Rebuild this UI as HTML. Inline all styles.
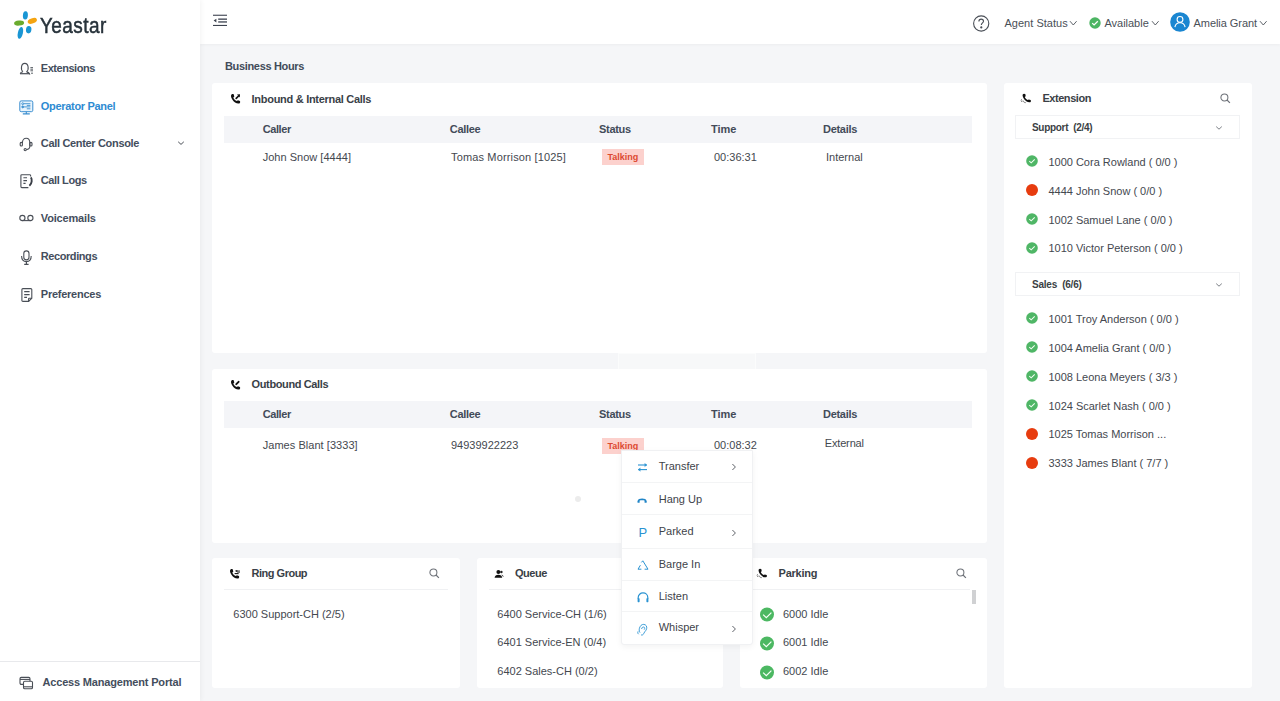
<!DOCTYPE html>
<html><head><meta charset="utf-8">
<style>
*{box-sizing:border-box;margin:0;padding:0}
html,body{width:1280px;height:701px;overflow:hidden;background:#f5f6f8;font-family:"Liberation Sans",sans-serif;color:#45494f}
.a{position:absolute}
.t{position:absolute;white-space:nowrap}
.card{position:absolute;background:#fff;border-radius:3px}
.th{position:absolute;background:#f4f5f8}
</style></head><body>
<div class="a" style="left:200px;top:0;width:1080px;height:44px;background:#fff;box-shadow:0 1px 3px rgba(0,0,0,0.04)"></div>
<div class="a" style="left:0;top:0;width:200px;height:701px;background:#fff;box-shadow:1px 0 5px rgba(0,0,0,0.05)"></div>
<svg class="a" style="left:13px;top:10px" width="26" height="30" viewBox="0 0 26 30">
<ellipse cx="12.4" cy="5.4" rx="2.5" ry="4.2" fill="#1a96d4" transform="rotate(4 12.4 5.4)"/>
<ellipse cx="19.3" cy="10.9" rx="4.8" ry="2.6" fill="#f5a411" transform="rotate(-20 19.3 10.9)"/>
<ellipse cx="6.1" cy="13.1" rx="5" ry="2.5" fill="#6aab2e" transform="rotate(-5 6.1 13.1)"/>
<ellipse cx="15.7" cy="19.7" rx="2.7" ry="3.7" fill="#1a96d4" transform="rotate(8 15.7 19.7)"/>
<ellipse cx="7.4" cy="22.9" rx="2.5" ry="6" fill="#1a96d4" transform="rotate(13 7.4 22.9)"/>
</svg>
<div class="t" style="left:39.9px;top:13.05px;font-size:21.2px;line-height:25px;font-weight:400;color:#27323a;letter-spacing:0.500px;transform:scaleX(0.8957);transform-origin:0 0;-webkit-text-stroke:0.5px #27323a;">Yeastar</div>
<svg class="a" style="left:19px;top:62px" width="15" height="13" viewBox="0 0 15 13" fill="none" stroke="#4a4f57" stroke-width="1.1">
<path d="M4 9.6 C1.6 8 1.8 1.4 5.8 1.4 C9.8 1.4 10 8 7.6 9.6"/>
<path d="M1.2 11.6 C1.6 10.4 2.6 10 4 9.8 M7.6 9.8 C9 10 10 10.4 10.4 11.6 Z" />
<path d="M1 11.7 H10.6" stroke-width="1.2"/>
<path d="M11.4 5.6 H14 M11.4 7.2 H14 M11.4 8.8 H14 M12 11.2 H14" stroke-width="0.9"/>
</svg>
<svg class="a" style="left:19px;top:99.5px" width="15" height="15" viewBox="0 0 15 15" fill="none" stroke="#3a8ed0" stroke-width="1">
<rect x="0.8" y="0.9" width="13" height="10.8" rx="1.4" fill="#e9f4fc"/>
<circle cx="3.7" cy="3.7" r="0.95" fill="#e9f4fc" stroke-width="0.9"/><path d="M4.7 3.7 H11.4" stroke-width="0.9"/>
<path d="M7.8 5.4 H11.4" stroke-width="0.9"/>
<circle cx="3.7" cy="6.9" r="0.95" fill="#3a8ed0" stroke-width="0.9"/><path d="M4.7 6.9 H11.4" stroke-width="0.9"/>
<path d="M7.8 8.8 H11.4" stroke-width="0.9"/>
<path d="M7.3 11.7 V13.6 M3.8 13.9 H10.8" stroke-width="1.1"/>
</svg>
<svg class="a" style="left:19px;top:137px" width="15" height="15" viewBox="0 0 15 15" fill="none" stroke="#4a4f57" stroke-width="1.1">
<path d="M3.4 6 C3.4 2.6 5.3 1.3 7.2 1.3 C9.1 1.3 10.8 2.6 10.8 6 V9.6 C10.8 11.2 9.6 12.3 7.3 12.6"/>
<rect x="1.2" y="5.4" width="2.2" height="3.6" rx="1"/>
<rect x="10.8" y="5.4" width="2.2" height="3.6" rx="1"/>
<circle cx="6.2" cy="12.6" r="1.1"/>
</svg>
<svg class="a" style="left:19.5px;top:173.5px" width="14" height="15" viewBox="0 0 14 15" fill="none" stroke="#4a4f57" stroke-width="1.1">
<path d="M10.6 2.4 V1.6 C10.6 1 10.2 0.7 9.6 0.7 H1.8 C1.2 0.7 0.9 1 0.9 1.6 V12.6 C0.9 13.2 1.2 13.6 1.8 13.6 H8.4"/>
<path d="M3.4 3.8 H7 M3.4 6.6 H7 M3.4 9.4 H5.6"/>
<path d="M10.8 3.4 C12.2 5 12.2 9.6 9.4 11.8" stroke-width="1.9" stroke="#3a3f47"/>
</svg>
<svg class="a" style="left:19px;top:213px" width="15" height="10" viewBox="0 0 15 10" fill="none" stroke="#4a4f57" stroke-width="1.1">
<circle cx="3.4" cy="5" r="2.6"/><circle cx="11.4" cy="5" r="2.6"/><path d="M3.4 7.6 H11.4"/>
</svg>
<svg class="a" style="left:20px;top:249.5px" width="13" height="16" viewBox="0 0 13 16" fill="none" stroke="#4a4f57" stroke-width="1.1">
<rect x="3.8" y="0.9" width="5.2" height="9" rx="2.6"/>
<path d="M1.6 6 C1.6 10 4 11.6 6.4 11.6 C8.8 11.6 11.2 10 11.2 6"/>
<path d="M6.4 11.6 V14.2 M4.2 14.4 H8.6" stroke-width="1.2"/>
</svg>
<svg class="a" style="left:20.5px;top:288px" width="13" height="15" viewBox="0 0 13 15" fill="none" stroke="#4a4f57" stroke-width="1.1">
<path d="M7.6 13.4 H1.9 C1.3 13.4 0.9 13 0.9 12.4 V1.6 C0.9 1 1.3 0.6 1.9 0.6 H9.8 C10.4 0.6 10.8 1 10.8 1.6 V10.2 Z"/>
<path d="M7.6 13.4 V10.8 C7.6 10.4 7.8 10.2 8.2 10.2 H10.8"/>
<path d="M3.2 3.6 H8.6 M3.2 6.6 H8.6 M3.2 9.4 H6"/>
</svg>
<svg class="a" style="left:18.5px;top:675.5px" width="15" height="15" viewBox="0 0 15 15" fill="none" stroke="#4a4f57" stroke-width="1.1">
<rect x="1" y="1.4" width="10" height="7" rx="1.3"/>
<path d="M1 3.4 H11"/>
<rect x="4.5" y="5.2" width="9" height="7.6" rx="1.3" fill="#fff"/>
<path d="M4.5 10.8 H13.5"/>
</svg>
<div class="t" style="left:40.8px;top:61.59px;font-size:11px;line-height:13px;font-weight:700;color:#444e5d;letter-spacing:-0.459px;">Extensions</div>
<div class="t" style="left:40.8px;top:99.99px;font-size:11px;line-height:13px;font-weight:700;color:#2e8bd2;letter-spacing:-0.311px;">Operator Panel</div>
<div class="t" style="left:40.8px;top:137.29px;font-size:11px;line-height:13px;font-weight:700;color:#444e5d;letter-spacing:-0.328px;">Call Center Console</div>
<div class="t" style="left:40.8px;top:173.69px;font-size:11px;line-height:13px;font-weight:700;color:#444e5d;letter-spacing:-0.391px;">Call Logs</div>
<div class="t" style="left:40.8px;top:211.69px;font-size:11px;line-height:13px;font-weight:700;color:#444e5d;letter-spacing:-0.167px;">Voicemails</div>
<div class="t" style="left:40.8px;top:250.09px;font-size:11px;line-height:13px;font-weight:700;color:#444e5d;letter-spacing:-0.422px;">Recordings</div>
<div class="t" style="left:40.8px;top:288.29px;font-size:11px;line-height:13px;font-weight:700;color:#444e5d;letter-spacing:-0.245px;">Preferences</div>
<svg class="a" style="left:177px;top:140px" width="8" height="6" viewBox="0 0 8 6" fill="none" stroke="#4a4f57" stroke-width="1"><path d="M1.2 1.8 L4 4.4 L6.8 1.8"/></svg>
<div class="a" style="left:0;top:661px;width:200px;height:1px;background:#e8e9ec"></div>
<div class="t" style="left:42.5px;top:675.99px;font-size:11px;line-height:13px;font-weight:700;color:#444e5d;letter-spacing:-0.178px;">Access Management Portal</div>
<svg class="a" style="left:213px;top:14px" width="15" height="13" viewBox="0 0 15 13">
<rect x="0" y="0.7" width="14" height="1.1" fill="#3d4350"/>
<rect x="5.2" y="4.5" width="8.8" height="1.3" fill="#3d4350"/>
<rect x="5.2" y="7.3" width="8.8" height="1.3" fill="#3d4350"/>
<rect x="0" y="10.9" width="14" height="1.1" fill="#3d4350"/>
<path d="M0.6 6.6 L3.4 4.8 L3.4 8.4 Z" fill="#3d4350"/>
</svg>
<svg class="a" style="left:972px;top:15px" width="19" height="17" viewBox="0 0 19 17" fill="none" stroke="#4a4f57" stroke-width="1.1">
<circle cx="9.2" cy="8.5" r="7.6"/>
<path d="M6.9 6.4 C6.9 4.9 7.9 4.1 9.2 4.1 C10.6 4.1 11.5 5 11.5 6.2 C11.5 7.8 9.3 8 9.3 10"/>
<circle cx="9.3" cy="12.4" r="0.55" fill="#4a4f57"/>
</svg>
<div class="t" style="left:1004.4px;top:16.89px;font-size:11px;line-height:13px;font-weight:400;color:#4a4f57;letter-spacing:0.033px;">Agent Status</div>
<svg class="a" style="left:1069px;top:19.8px" width="9" height="7" viewBox="0 0 9 7" fill="none" stroke="#4a4f57" stroke-width="0.9"><path d="M1 1.2 L4.3 5 L7.6 1.2"/></svg>
<svg class="a" style="left:1088.5px;top:16.5px" width="12" height="12" viewBox="0 0 12 12">
<circle cx="6" cy="6" r="5.7" fill="#4cb563"/>
<path d="M3.2 6.1 L5.1 7.9 L8.8 4.3" fill="none" stroke="#fff" stroke-width="1.3"/>
</svg>
<div class="t" style="left:1104.4px;top:16.89px;font-size:11px;line-height:13px;font-weight:400;color:#4a4f57;letter-spacing:-0.006px;">Available</div>
<svg class="a" style="left:1150.5px;top:19.8px" width="9" height="7" viewBox="0 0 9 7" fill="none" stroke="#4a4f57" stroke-width="0.9"><path d="M1 1.2 L4.3 5 L7.6 1.2"/></svg>
<svg class="a" style="left:1169.5px;top:12px" width="20" height="20" viewBox="0 0 20 20">
<circle cx="10" cy="10" r="9.8" fill="#1a86d1"/>
<circle cx="10" cy="7.4" r="2.9" fill="none" stroke="#fff" stroke-width="1.1"/>
<path d="M4.9 15.2 C5.4 12.2 7.4 10.8 10 10.8 C12.6 10.8 14.6 12.2 15.1 15.2" fill="none" stroke="#fff" stroke-width="1.1"/>
</svg>
<div class="t" style="left:1193.5px;top:16.89px;font-size:11px;line-height:13px;font-weight:400;color:#4a4f57;letter-spacing:-0.050px;">Amelia Grant</div>
<svg class="a" style="left:1258.5px;top:19.8px" width="9" height="7" viewBox="0 0 9 7" fill="none" stroke="#4a4f57" stroke-width="0.9"><path d="M1 1.2 L4.3 5 L7.6 1.2"/></svg>
<div class="t" style="left:225.0px;top:59.69px;font-size:11px;line-height:13px;font-weight:700;color:#414b59;letter-spacing:-0.339px;">Business Hours</div>
<div class="card" style="left:212px;top:83px;width:775px;height:270px"></div>
<svg class="a" style="left:226px;top:90px" width="20" height="16" viewBox="0 0 20 16"><path d="M5.1 5.3 C5.5 4.1 6.9 3.7 7.8 4.5 L8.3 6.7 L7.3 7.5 C7.9 9.1 9.3 10.5 10.9 11.1 L11.9 10.3 L13.9 10.9 C14.5 11.7 14.1 13.1 13.1 13.5 C10.7 13.9 7.9 12.1 6.3 9.5 C5.3 7.9 4.8 6.5 5.1 5.3 Z" fill="#111"/><path d="M10.2 8.4 L12.6 6" stroke="#111" stroke-width="1.7" stroke-linecap="round"/><path d="M11 4.6 L14 4.2 L13.8 7.4 Z" fill="#111"/></svg>
<div class="t" style="left:251.6px;top:92.89px;font-size:11px;line-height:13px;font-weight:700;color:#3a3f47;letter-spacing:-0.288px;">Inbound &amp; Internal Calls</div>
<div class="th" style="left:224px;top:116px;width:748px;height:27px"></div>
<div class="t" style="left:262.7px;top:122.69px;font-size:11px;line-height:13px;font-weight:700;color:#434b59;letter-spacing:-0.396px;">Caller</div>
<div class="t" style="left:449.8px;top:122.69px;font-size:11px;line-height:13px;font-weight:700;color:#434b59;letter-spacing:-0.320px;">Callee</div>
<div class="t" style="left:599.0px;top:122.69px;font-size:11px;line-height:13px;font-weight:700;color:#434b59;letter-spacing:-0.304px;">Status</div>
<div class="t" style="left:711.1px;top:122.69px;font-size:11px;line-height:13px;font-weight:700;color:#434b59;letter-spacing:-0.046px;">Time</div>
<div class="t" style="left:823.0px;top:122.69px;font-size:11px;line-height:13px;font-weight:700;color:#434b59;letter-spacing:-0.297px;">Details</div>
<div class="t" style="left:262.7px;top:150.59px;font-size:11px;line-height:13px;font-weight:400;color:#44484f;letter-spacing:0.014px;">John Snow [4444]</div>
<div class="t" style="left:451.0px;top:150.59px;font-size:11px;line-height:13px;font-weight:400;color:#44484f;letter-spacing:0.148px;">Tomas Morrison [1025]</div>
<div class="a" style="left:602px;top:149px;width:42px;height:16px;background:#fcd1cd"></div>
<div class="t" style="left:607.5px;top:152.18px;font-size:9px;line-height:11px;font-weight:700;color:#dc4a31;letter-spacing:-0.006px;">Talking</div>
<div class="t" style="left:714.0px;top:150.59px;font-size:11px;line-height:13px;font-weight:400;color:#44484f;letter-spacing:0.000px;">00:36:31</div>
<div class="t" style="left:826.0px;top:150.59px;font-size:11px;line-height:13px;font-weight:400;color:#44484f;letter-spacing:0.000px;">Internal</div>
<div class="a" style="left:618px;top:352.5px;width:138px;height:18.5px;background:#f7f8f9;border:1px solid rgba(255,255,255,0.5)"></div>
<div class="card" style="left:212px;top:369px;width:775px;height:174px"></div>
<svg class="a" style="left:226px;top:376px" width="20" height="16" viewBox="0 0 20 16"><path d="M5.1 5.3 C5.5 4.1 6.9 3.7 7.8 4.5 L8.3 6.7 L7.3 7.5 C7.9 9.1 9.3 10.5 10.9 11.1 L11.9 10.3 L13.9 10.9 C14.5 11.7 14.1 13.1 13.1 13.5 C10.7 13.9 7.9 12.1 6.3 9.5 C5.3 7.9 4.8 6.5 5.1 5.3 Z" fill="#111"/><path d="M10.3 8.2 L12.6 5.8" stroke="#111" stroke-width="1.9" stroke-linecap="round"/></svg>
<div class="t" style="left:251.6px;top:377.89px;font-size:11px;line-height:13px;font-weight:700;color:#3a3f47;letter-spacing:-0.378px;">Outbound Calls</div>
<div class="th" style="left:224px;top:401px;width:748px;height:27px"></div>
<div class="t" style="left:262.7px;top:407.99px;font-size:11px;line-height:13px;font-weight:700;color:#434b59;letter-spacing:-0.396px;">Caller</div>
<div class="t" style="left:449.8px;top:407.99px;font-size:11px;line-height:13px;font-weight:700;color:#434b59;letter-spacing:-0.320px;">Callee</div>
<div class="t" style="left:599.0px;top:407.99px;font-size:11px;line-height:13px;font-weight:700;color:#434b59;letter-spacing:-0.304px;">Status</div>
<div class="t" style="left:711.1px;top:407.99px;font-size:11px;line-height:13px;font-weight:700;color:#434b59;letter-spacing:-0.046px;">Time</div>
<div class="t" style="left:823.0px;top:407.99px;font-size:11px;line-height:13px;font-weight:700;color:#434b59;letter-spacing:-0.297px;">Details</div>
<div class="t" style="left:262.7px;top:439.39px;font-size:11px;line-height:13px;font-weight:400;color:#44484f;letter-spacing:0.046px;">James Blant [3333]</div>
<div class="t" style="left:451.0px;top:439.39px;font-size:11px;line-height:13px;font-weight:400;color:#44484f;letter-spacing:0.000px;">94939922223</div>
<div class="a" style="left:602px;top:438px;width:42px;height:16px;background:#fcd1cd"></div>
<div class="t" style="left:607.5px;top:440.78px;font-size:9px;line-height:11px;font-weight:700;color:#dc4a31;letter-spacing:-0.006px;">Talking</div>
<div class="t" style="left:714.0px;top:439.39px;font-size:11px;line-height:13px;font-weight:400;color:#44484f;letter-spacing:0.000px;">00:08:32</div>
<div class="t" style="left:824.7px;top:436.59px;font-size:11px;line-height:13px;font-weight:400;color:#44484f;letter-spacing:-0.145px;">External</div>
<div class="a" style="left:575px;top:496px;width:6px;height:6px;border-radius:50%;background:#ececec;filter:blur(0.7px)"></div>
<div class="card" style="left:212px;top:558px;width:248px;height:130px"></div>
<div class="a" style="left:224px;top:589px;width:224px;height:1px;background:#f0f1f3"></div>
<svg class="a" style="left:226px;top:565px" width="20" height="16" viewBox="0 0 20 16"><g transform="translate(-1,0)"><path d="M5.1 5.3 C5.5 4.1 6.9 3.7 7.8 4.5 L8.3 6.7 L7.3 7.5 C7.9 9.1 9.3 10.5 10.9 11.1 L11.9 10.3 L13.9 10.9 C14.5 11.7 14.1 13.1 13.1 13.5 C10.7 13.9 7.9 12.1 6.3 9.5 C5.3 7.9 4.8 6.5 5.1 5.3 Z" fill="#111"/></g><circle cx="10.6" cy="6" r="1.1" fill="#111"/><path d="M9.2 5.2 H14 V8 H11.6" fill="#555" opacity="0.75"/><path d="M8.6 8.6 H12.6" stroke="#111" stroke-width="1.1"/></svg>
<div class="t" style="left:251.6px;top:566.99px;font-size:11px;line-height:13px;font-weight:700;color:#3a3f47;letter-spacing:-0.500px;">Ring Group</div>
<svg class="a" style="left:428.5px;top:567.5px" width="11" height="11" viewBox="0 0 11 11" fill="none" stroke="#6d7178" stroke-width="1.05">
<circle cx="4.4" cy="4.4" r="3.5"/><path d="M7 7 L9.9 9.9" stroke-width="1.2"/>
</svg>
<div class="t" style="left:233.3px;top:607.89px;font-size:11px;line-height:13px;font-weight:400;color:#44484f;letter-spacing:0.000px;">6300 Support-CH (2/5)</div>
<div class="card" style="left:477px;top:558px;width:246px;height:130px"></div>
<div class="a" style="left:489px;top:589px;width:222px;height:1px;background:#f0f1f3"></div>
<svg class="a" style="left:490px;top:565px" width="20" height="16" viewBox="0 0 20 16"><circle cx="11.4" cy="7" r="1.2" fill="#222"/><path d="M11.8 10 C12.6 10.2 13 10.8 13.2 11.6" stroke="#222" stroke-width="0.9" fill="none"/><circle cx="8.4" cy="7" r="2" fill="#111"/><path d="M4.6 12.8 C4.8 10.8 6.2 9.8 8.4 9.8 C10.6 9.8 12 10.8 12.2 12.8 Z" fill="#111"/></svg>
<div class="t" style="left:515.0px;top:566.99px;font-size:11px;line-height:13px;font-weight:700;color:#3a3f47;letter-spacing:-0.487px;">Queue</div>
<div class="t" style="left:497.3px;top:607.89px;font-size:11px;line-height:13px;font-weight:400;color:#44484f;letter-spacing:0.000px;">6400 Service-CH (1/6)</div>
<div class="t" style="left:497.3px;top:636.49px;font-size:11px;line-height:13px;font-weight:400;color:#44484f;letter-spacing:0.000px;">6401 Service-EN (0/4)</div>
<div class="t" style="left:497.3px;top:664.89px;font-size:11px;line-height:13px;font-weight:400;color:#44484f;letter-spacing:0.000px;">6402 Sales-CH (0/2)</div>
<div class="card" style="left:740px;top:558px;width:247px;height:130px"></div>
<div class="a" style="left:752px;top:589px;width:218px;height:1px;background:#f0f1f3"></div>
<div class="a" style="left:972px;top:590px;width:4px;height:14px;background:#d0d1d3"></div>
<svg class="a" style="left:752px;top:565.2px" width="16" height="16" viewBox="0 0 16 16"><path d="M6.6 4.8 C7.1 3.6 8.6 3.4 9.4 4.3 L9.7 6.2 L8.8 7 C9.3 8.4 10.4 9.5 11.8 10 L12.8 9.4 L14.6 10 C15.2 10.8 15 12 14.1 12.3 C12 12.7 9.8 11.4 8.4 9.6 C7.2 8 6.4 6.2 6.6 4.8 Z" fill="#111"/><path d="M5.6 9.4 C4.6 10.2 5 11.6 6 11.4 C6.6 11.2 6.8 10.6 7.4 11 C7.8 11.4 7.4 12 8.2 12.3 C8.8 12.6 9.2 12.2 9.8 12.8" stroke="#333" stroke-width="0.85" fill="none" stroke-dasharray="1.1 0.6"/></svg>
<div class="t" style="left:778.6px;top:566.99px;font-size:11px;line-height:13px;font-weight:700;color:#3a3f47;letter-spacing:-0.266px;">Parking</div>
<svg class="a" style="left:956px;top:567.5px" width="11" height="11" viewBox="0 0 11 11" fill="none" stroke="#6d7178" stroke-width="1.05">
<circle cx="4.4" cy="4.4" r="3.5"/><path d="M7 7 L9.9 9.9" stroke-width="1.2"/>
</svg>
<svg class="a" style="left:760px;top:607.3px" width="15" height="15" viewBox="0 0 15 15">
<circle cx="7" cy="7.5" r="7" fill="#4cb862"/><path d="M3.1 7.6 L6.3 10.6 L11.4 5.6" fill="none" stroke="#f6fff6" stroke-width="1.25"/></svg>
<svg class="a" style="left:760px;top:635.9px" width="15" height="15" viewBox="0 0 15 15">
<circle cx="7" cy="7.5" r="7" fill="#4cb862"/><path d="M3.1 7.6 L6.3 10.6 L11.4 5.6" fill="none" stroke="#f6fff6" stroke-width="1.25"/></svg>
<svg class="a" style="left:760px;top:664.5px" width="15" height="15" viewBox="0 0 15 15">
<circle cx="7" cy="7.5" r="7" fill="#4cb862"/><path d="M3.1 7.6 L6.3 10.6 L11.4 5.6" fill="none" stroke="#f6fff6" stroke-width="1.25"/></svg>
<div class="t" style="left:783.0px;top:607.89px;font-size:11px;line-height:13px;font-weight:400;color:#44484f;letter-spacing:0.000px;">6000 Idle</div>
<div class="t" style="left:783.0px;top:636.49px;font-size:11px;line-height:13px;font-weight:400;color:#44484f;letter-spacing:0.000px;">6001 Idle</div>
<div class="t" style="left:783.0px;top:664.89px;font-size:11px;line-height:13px;font-weight:400;color:#44484f;letter-spacing:0.000px;">6002 Idle</div>
<div class="card" style="left:1004px;top:83px;width:247.5px;height:605px"></div>
<svg class="a" style="left:1016px;top:90px" width="16" height="16" viewBox="0 0 16 16"><path d="M6.6 4.8 C7.1 3.6 8.6 3.4 9.4 4.3 L9.7 6.2 L8.8 7 C9.3 8.4 10.4 9.5 11.8 10 L12.8 9.4 L14.6 10 C15.2 10.8 15 12 14.1 12.3 C12 12.7 9.8 11.4 8.4 9.6 C7.2 8 6.4 6.2 6.6 4.8 Z" fill="#111"/><path d="M5.6 9.4 C4.6 10.2 5 11.6 6 11.4 C6.6 11.2 6.8 10.6 7.4 11 C7.8 11.4 7.4 12 8.2 12.3 C8.8 12.6 9.2 12.2 9.8 12.8" stroke="#333" stroke-width="0.85" fill="none" stroke-dasharray="1.1 0.6"/></svg>
<div class="t" style="left:1042.4px;top:91.89px;font-size:11px;line-height:13px;font-weight:700;color:#3a3f47;letter-spacing:-0.442px;">Extension</div>
<svg class="a" style="left:1219.5px;top:92.5px" width="11" height="11" viewBox="0 0 11 11" fill="none" stroke="#6d7178" stroke-width="1.05">
<circle cx="4.4" cy="4.4" r="3.5"/><path d="M7 7 L9.9 9.9" stroke-width="1.2"/>
</svg>
<div class="a" style="left:1015px;top:115px;width:225px;height:24px;border:1px solid #f1f2f4"></div>
<div class="t" style="left:1032.0px;top:122.13px;font-size:10px;line-height:12px;font-weight:700;color:#3b3f45;letter-spacing:-0.304px;">Support&nbsp;&nbsp;(2/4)</div>
<svg class="a" style="left:1215px;top:125px" width="8" height="6" viewBox="0 0 8 6" fill="none" stroke="#6d7178" stroke-width="0.9"><path d="M1.2 1.6 L4 4.2 L6.8 1.6"/></svg>
<div class="a" style="left:1015px;top:272px;width:225px;height:24px;border:1px solid #f1f2f4"></div>
<div class="t" style="left:1032.0px;top:279.34px;font-size:10px;line-height:12px;font-weight:700;color:#3b3f45;letter-spacing:-0.222px;">Sales&nbsp;&nbsp;(6/6)</div>
<svg class="a" style="left:1215px;top:282px" width="8" height="6" viewBox="0 0 8 6" fill="none" stroke="#6d7178" stroke-width="0.9"><path d="M1.2 1.6 L4 4.2 L6.8 1.6"/></svg>
<svg class="a" style="left:1025.5px;top:155.1px" width="12" height="12" viewBox="0 0 12 12">
<circle cx="6" cy="6" r="5.8" fill="#4fb666"/><path d="M3.3 6.2 L5.2 7.9 L8.7 4.4" fill="none" stroke="#f4fff4" stroke-width="1.05"/></svg>
<div class="t" style="left:1048.4px;top:155.79px;font-size:11px;line-height:13px;font-weight:400;color:#44484f;letter-spacing:0.000px;">1000 Cora Rowland ( 0/0 )</div>
<div class="a" style="left:1025.5px;top:184px;width:12px;height:12px;border-radius:50%;background:#e73c0f"></div>
<div class="t" style="left:1048.4px;top:184.69px;font-size:11px;line-height:13px;font-weight:400;color:#44484f;letter-spacing:0.000px;">4444 John Snow ( 0/0 )</div>
<svg class="a" style="left:1025.5px;top:212.9px" width="12" height="12" viewBox="0 0 12 12">
<circle cx="6" cy="6" r="5.8" fill="#4fb666"/><path d="M3.3 6.2 L5.2 7.9 L8.7 4.4" fill="none" stroke="#f4fff4" stroke-width="1.05"/></svg>
<div class="t" style="left:1048.4px;top:213.59px;font-size:11px;line-height:13px;font-weight:400;color:#44484f;letter-spacing:0.000px;">1002 Samuel Lane ( 0/0 )</div>
<svg class="a" style="left:1025.5px;top:241.8px" width="12" height="12" viewBox="0 0 12 12">
<circle cx="6" cy="6" r="5.8" fill="#4fb666"/><path d="M3.3 6.2 L5.2 7.9 L8.7 4.4" fill="none" stroke="#f4fff4" stroke-width="1.05"/></svg>
<div class="t" style="left:1048.4px;top:242.49px;font-size:11px;line-height:13px;font-weight:400;color:#44484f;letter-spacing:0.000px;">1010 Victor Peterson ( 0/0 )</div>
<svg class="a" style="left:1025.5px;top:312.4px" width="12" height="12" viewBox="0 0 12 12">
<circle cx="6" cy="6" r="5.8" fill="#4fb666"/><path d="M3.3 6.2 L5.2 7.9 L8.7 4.4" fill="none" stroke="#f4fff4" stroke-width="1.05"/></svg>
<div class="t" style="left:1048.4px;top:313.09px;font-size:11px;line-height:13px;font-weight:400;color:#44484f;letter-spacing:0.000px;">1001 Troy Anderson ( 0/0 )</div>
<svg class="a" style="left:1025.5px;top:341.2px" width="12" height="12" viewBox="0 0 12 12">
<circle cx="6" cy="6" r="5.8" fill="#4fb666"/><path d="M3.3 6.2 L5.2 7.9 L8.7 4.4" fill="none" stroke="#f4fff4" stroke-width="1.05"/></svg>
<div class="t" style="left:1048.4px;top:341.89px;font-size:11px;line-height:13px;font-weight:400;color:#44484f;letter-spacing:0.000px;">1004 Amelia Grant ( 0/0 )</div>
<svg class="a" style="left:1025.5px;top:370.1px" width="12" height="12" viewBox="0 0 12 12">
<circle cx="6" cy="6" r="5.8" fill="#4fb666"/><path d="M3.3 6.2 L5.2 7.9 L8.7 4.4" fill="none" stroke="#f4fff4" stroke-width="1.05"/></svg>
<div class="t" style="left:1048.4px;top:370.79px;font-size:11px;line-height:13px;font-weight:400;color:#44484f;letter-spacing:0.000px;">1008 Leona Meyers ( 3/3 )</div>
<svg class="a" style="left:1025.5px;top:398.9px" width="12" height="12" viewBox="0 0 12 12">
<circle cx="6" cy="6" r="5.8" fill="#4fb666"/><path d="M3.3 6.2 L5.2 7.9 L8.7 4.4" fill="none" stroke="#f4fff4" stroke-width="1.05"/></svg>
<div class="t" style="left:1048.4px;top:399.59px;font-size:11px;line-height:13px;font-weight:400;color:#44484f;letter-spacing:0.000px;">1024 Scarlet Nash ( 0/0 )</div>
<div class="a" style="left:1025.5px;top:427.8px;width:12px;height:12px;border-radius:50%;background:#e73c0f"></div>
<div class="t" style="left:1048.4px;top:428.49px;font-size:11px;line-height:13px;font-weight:400;color:#44484f;letter-spacing:0.000px;">1025 Tomas Morrison ...</div>
<div class="a" style="left:1025.5px;top:456.6px;width:12px;height:12px;border-radius:50%;background:#e73c0f"></div>
<div class="t" style="left:1048.4px;top:457.29px;font-size:11px;line-height:13px;font-weight:400;color:#44484f;letter-spacing:0.000px;">3333 James Blant ( 7/7 )</div>
<div class="a" style="left:620.5px;top:450px;width:132px;height:195px;background:#fff;border:1px solid #f0f1f3;border-radius:0 0 3px 3px;box-shadow:0 2px 6px rgba(0,0,0,0.05)"></div>
<div class="a" style="left:621.5px;top:482.2px;width:130px;height:1px;background:#f3f4f5"></div>
<div class="a" style="left:621.5px;top:514.4px;width:130px;height:1px;background:#f3f4f5"></div>
<div class="a" style="left:621.5px;top:547.8px;width:130px;height:1px;background:#f3f4f5"></div>
<div class="a" style="left:621.5px;top:579.9px;width:130px;height:1px;background:#f3f4f5"></div>
<div class="a" style="left:621.5px;top:611.3px;width:130px;height:1px;background:#f3f4f5"></div>
<svg class="a" style="left:637px;top:463px" width="11" height="9" viewBox="0 0 11 9" fill="none" stroke="#2a93d2" stroke-width="1.1">
<path d="M1 2 H9.6"/><path d="M7.6 0.4 L9.8 2 L7.6 3.6" fill="#2a93d2" stroke-width="0.6"/>
<path d="M10 6.6 H1.4"/><path d="M3.4 5 L1.2 6.6 L3.4 8.2" fill="#2a93d2" stroke-width="0.6"/>
</svg>
<svg class="a" style="left:637px;top:496.5px" width="11" height="7" viewBox="0 0 11 7">
<path d="M0.4 4.4 C0.8 2.2 2.8 1.5 5.1 1.5 C7.4 1.5 9.4 2.2 9.8 4.4 L9.6 5.7 L7.6 5.7 L7.5 3.5 C6.2 3 4 3 2.7 3.5 L2.6 5.7 L0.6 5.7 Z" fill="#2185c7"/>
</svg>
<div class="t" style="left:638.4px;top:525.6px;font-size:13px;line-height:13px;color:#2a93d2;">P</div>
<svg class="a" style="left:636.5px;top:559.5px" width="12" height="11" viewBox="0 0 12 11" fill="none" stroke="#2a93d2" stroke-width="1">
<path d="M4.4 2.4 L5.8 0.8 L11 9.2 H7.6"/><path d="M4.4 9.2 H1 L3.4 5.2"/>
</svg>
<svg class="a" style="left:636.5px;top:591.5px" width="12" height="11" viewBox="0 0 12 11" fill="none" stroke="#2a93d2" stroke-width="1.2">
<path d="M1.2 7 V5.6 C1.2 2.8 3.4 0.9 6 0.9 C8.6 0.9 10.8 2.8 10.8 5.6 V7"/>
<rect x="0.6" y="6.2" width="2" height="4" rx="0.6" fill="#2a93d2" stroke="none"/>
<rect x="9.4" y="6.2" width="2" height="4" rx="0.6" fill="#2a93d2" stroke="none"/>
</svg>
<svg class="a" style="left:637px;top:622.5px" width="11" height="13" viewBox="0 0 11 13" fill="none" stroke="#2a93d2" stroke-width="0.9">
<path d="M3 9.6 C1.8 8.2 2 5.6 3 3.8 C4 1.6 6.4 0.8 8.2 1.8 C10 2.8 10.2 5.2 9 7.2 C8.2 8.6 7.2 9 6.8 10.4 C6.4 11.8 5 12.4 4 11.8"/>
<path d="M4.6 6 C4.8 4.4 6 3.6 7.2 4.2 C8 4.8 7.8 5.8 7.2 6.6"/>
<path d="M1 8.4 C0.6 9.4 0.8 10.6 1.6 11.2"/>
</svg>
<div class="t" style="left:658.7px;top:459.59px;font-size:11px;line-height:13px;font-weight:400;color:#3e434a;letter-spacing:0.000px;">Transfer</div>
<svg class="a" style="left:731px;top:463.4px" width="6" height="8" viewBox="0 0 6 8" fill="none" stroke="#555a60" stroke-width="0.95"><path d="M1.4 1 L4.4 4 L1.4 7"/></svg>
<div class="t" style="left:658.7px;top:492.69px;font-size:11px;line-height:13px;font-weight:400;color:#3e434a;letter-spacing:0.000px;">Hang Up</div>
<div class="t" style="left:658.7px;top:524.69px;font-size:11px;line-height:13px;font-weight:400;color:#3e434a;letter-spacing:0.000px;">Parked</div>
<svg class="a" style="left:731px;top:528.5px" width="6" height="8" viewBox="0 0 6 8" fill="none" stroke="#555a60" stroke-width="0.95"><path d="M1.4 1 L4.4 4 L1.4 7"/></svg>
<div class="t" style="left:658.7px;top:557.89px;font-size:11px;line-height:13px;font-weight:400;color:#3e434a;letter-spacing:0.000px;">Barge In</div>
<div class="t" style="left:658.7px;top:589.69px;font-size:11px;line-height:13px;font-weight:400;color:#3e434a;letter-spacing:0.000px;">Listen</div>
<div class="t" style="left:658.7px;top:621.39px;font-size:11px;line-height:13px;font-weight:400;color:#3e434a;letter-spacing:0.000px;">Whisper</div>
<svg class="a" style="left:731px;top:625.2px" width="6" height="8" viewBox="0 0 6 8" fill="none" stroke="#555a60" stroke-width="0.95"><path d="M1.4 1 L4.4 4 L1.4 7"/></svg>
</body></html>
